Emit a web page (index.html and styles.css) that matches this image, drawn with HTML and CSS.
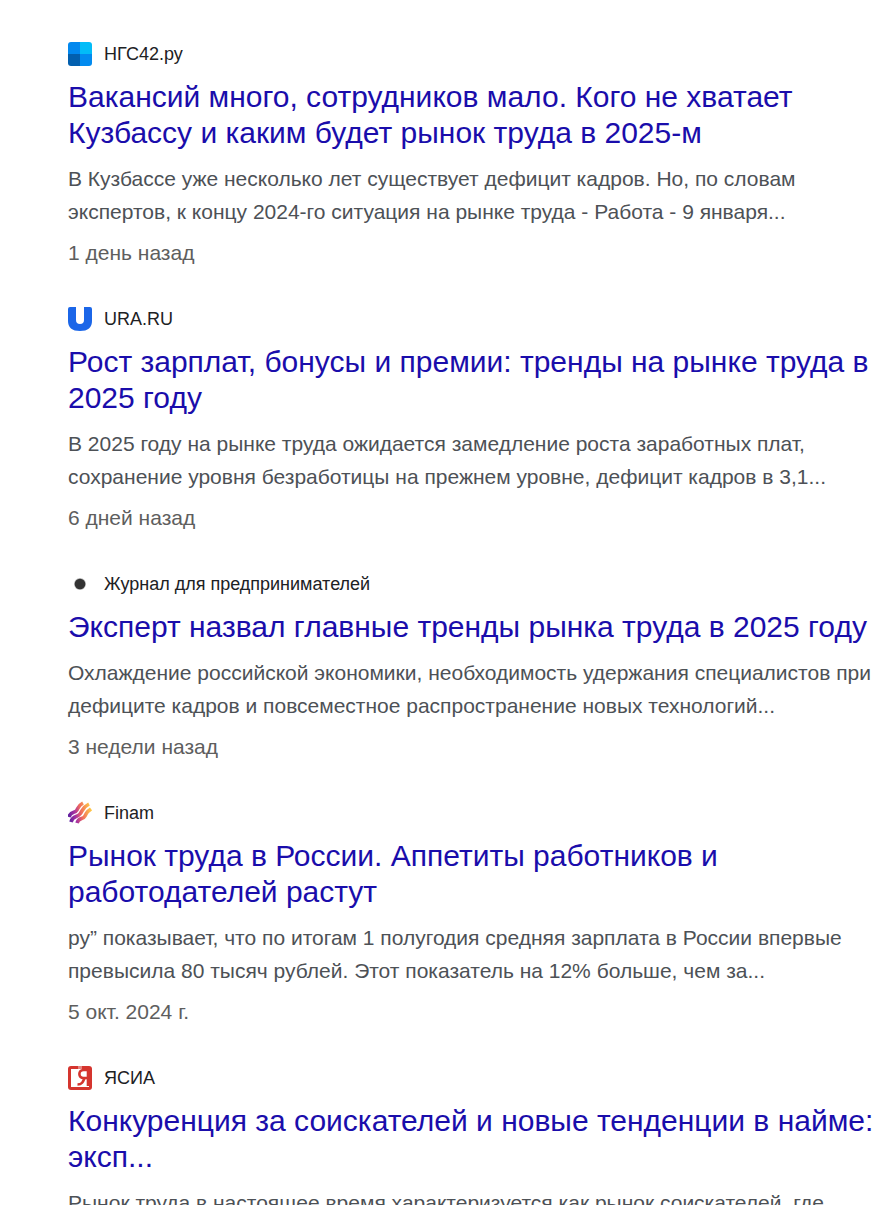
FILE: index.html
```html
<!DOCTYPE html>
<html lang="ru">
<head>
    <meta charset="UTF-8">
    <meta name="viewport" content="width=device-width, initial-scale=1.0">
    <title>Рынок труда 2025</title>
    <link rel="stylesheet" href="styles.css">
</head>
<body>
    <main class="results">
        <article class="result">
            <div class="source">
                <svg class="favicon" viewBox="0 0 24 24" aria-hidden="true">
                    <defs>
                        <clipPath id="ngsClip"><rect width="24" height="24" rx="3"/></clipPath>
                    </defs>
                    <g clip-path="url(#ngsClip)">
                        <rect width="12" height="12" fill="#0288ee"/>
                        <rect x="12" width="12" height="12" fill="#02bcf8"/>
                        <rect y="12" width="12" height="12" fill="#025fae"/>
                        <rect x="12" y="12" width="12" height="12" fill="#028bef"/>
                    </g>
                </svg>
                <span>НГС42.ру</span>
            </div>
            <h3 class="title"><a href="#">Вакансий много, сотрудников мало. Кого не хватает Кузбассу и каким будет рынок труда в 2025-м</a></h3>
            <p class="snippet">В Кузбассе уже несколько лет существует дефицит кадров. Но, по словам экспертов, к концу 2024-го ситуация на рынке труда - Работа - 9 января...</p>
            <div class="date">1 день назад</div>
        </article>

        <article class="result">
            <div class="source">
                <svg class="favicon" viewBox="0 0 24 24" aria-hidden="true">
                    <path d="M2 0H8V13Q8 17 12 17T16 13V0H22Q24 0 24 2V14Q24 24 12 24T0 14V2Q0 0 2 0Z" fill="#1b66e8"/>
                </svg>
                <span>URA.RU</span>
            </div>
            <h3 class="title"><a href="#">Рост зарплат, бонусы и премии: тренды на рынке труда в 2025 году</a></h3>
            <p class="snippet">В 2025 году на рынке труда ожидается замедление роста заработных плат, сохранение уровня безработицы на прежнем уровне, дефицит кадров в 3,1...</p>
            <div class="date">6 дней назад</div>
        </article>

        <article class="result">
            <div class="source">
                <svg class="favicon" viewBox="0 0 24 24" aria-hidden="true">
                    <circle cx="12" cy="12" r="6" fill="#bbb"/>
                    <circle cx="12" cy="12" r="5.3" fill="#333"/>
                </svg>
                <span>Журнал для предпринимателей</span>
            </div>
            <h3 class="title"><a href="#">Эксперт назвал главные тренды рынка труда в 2025 году</a></h3>
            <p class="snippet">Охлаждение российской экономики, необходимость удержания специалистов при дефиците кадров и повсеместное распространение новых технологий...</p>
            <div class="date">3 недели назад</div>
        </article>

        <article class="result">
            <div class="source">
                <svg class="favicon" viewBox="0 0 24 24" aria-hidden="true">
                    <defs>
                        <linearGradient id="finam" gradientUnits="userSpaceOnUse" x1="0" y1="15" x2="24" y2="9">
                            <stop offset="0" stop-color="#5a1ea0"/>
                            <stop offset="0.3" stop-color="#a8329f"/>
                            <stop offset="0.55" stop-color="#f06a5c"/>
                            <stop offset="1" stop-color="#ffce45"/>
                        </linearGradient>
                    </defs>
                    <g fill="none" stroke="url(#finam)" stroke-width="3.6">
                        <path d="M1 16C3 9 7 13 9 9S11 4 15 2"/>
                        <path d="M3 21C5 14 9 17 12 13S15 6 21 3"/>
                        <path d="M9 22C11 16 15 19 17 15S19 11 23 8"/>
                    </g>
                </svg>
                <span>Finam</span>
            </div>
            <h3 class="title"><a href="#">Рынок труда в России. Аппетиты работников и работодателей растут</a></h3>
            <p class="snippet">ру” показывает, что по итогам 1 полугодия средняя зарплата в России впервые превысила 80 тысяч рублей. Этот показатель на 12% больше, чем за...</p>
            <div class="date">5 окт. 2024 г.</div>
        </article>

        <article class="result">
            <div class="source">
                <svg class="favicon" viewBox="0 0 24 24" aria-hidden="true">
                    <rect width="24" height="24" rx="3" fill="#d5352e"/>
                    <path d="M3 3H21V21H3Z" fill="#fff"/>
                    <path d="M10 0H14V3H10Z" fill="#fff" opacity="0.4"/>
                    <g fill="none" stroke="#d5352e" stroke-width="2.6">
                        <path d="M20 4H15.5C10 4 10 12 15.5 12H20"/>
                        <path d="M20 3V20"/>
                        <path d="M16.5 12C15 16 14 18.5 9.5 18.5"/>
                    </g>
                </svg>
                <span>ЯСИА</span>
            </div>
            <h3 class="title"><a href="#">Конкуренция за соискателей и новые тенденции в найме: эксп...</a></h3>
            <p class="snippet">Рынок труда в настоящее время характеризуется как рынок соискателей, где</p>
        </article>
    </main>
</body>
</html>
```

FILE: styles.css
```css
html {
    overflow-x: hidden;
}
body {
    margin: 0;
    background-color: #fff;
    font-family: "Liberation Sans", Arial, sans-serif;
}
.results {
    box-sizing: border-box;
    max-width: 900px;
    padding: 42px 20px 0 68px;
}
.result {
    margin-bottom: 38px;
}
.source {
    display: flex;
    align-items: center;
    gap: 12px;
    height: 24px;
    font-size: 18px;
    color: #202124;
}
.favicon {
    width: 24px;
    height: 24px;
    flex: none;
}
.title {
    margin: 13px 0 11px;
    font-size: 30px;
    line-height: 36px;
    font-weight: normal;
}
.title a {
    color: #1a0dab;
    text-decoration: none;
}
.title a:hover {
    text-decoration: underline;
}
.snippet {
    margin: 0 0 8px;
    font-size: 21px;
    line-height: 33px;
    color: #4d5156;
}
.date {
    font-size: 21px;
    line-height: 33px;
    color: #5e5e5e;
}
```
